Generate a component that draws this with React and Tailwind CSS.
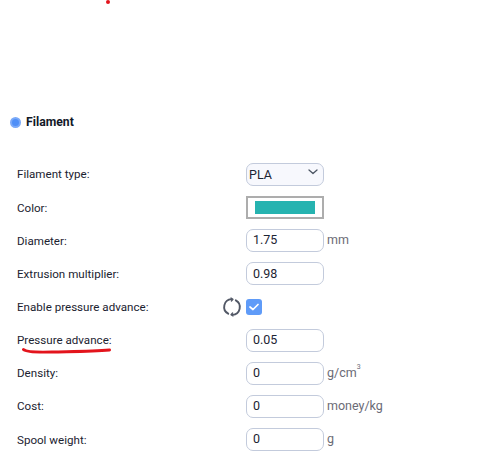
import React from "react";

const font = "font-['Roboto','Open_Sans',sans-serif]";

function TextInput({ value, unit }) {
  return (
    <div className="flex items-center gap-[3px]">
      <div className="w-[78px] h-[23px] border border-[#c3cbdc] rounded-[7px] pl-[6px] flex items-center text-[12.5px] text-[#1c2433] bg-white">
        {value}
      </div>
      {unit && <span className="text-[12.5px] text-[#6b6b76]">{unit}</span>}
    </div>
  );
}

function Row({ label, children, underline }) {
  return (
    <div className="h-[33.15px] flex items-center">
      <div className="relative w-[229px] pt-[1px] text-[11.6px] text-[#1b2230]">
        {label}
        {underline && (
          <svg className="absolute left-[5px] top-[16px]" width="90" height="8" viewBox="0 0 90 8" fill="none">
            <path d="M1.5 2.5C4 5 12 5.5 30 5C50 4.5 70 4.5 87.5 3" stroke="#e3141c" strokeWidth="3" strokeLinecap="round" />
          </svg>
        )}
      </div>
      {children}
    </div>
  );
}

export default function App() {
  return (
    <div className={`relative w-[480px] h-[465px] bg-white overflow-hidden ${font}`}>
      <div className="absolute left-[106px] top-0 w-[4px] h-[4px] rounded-full bg-[#e3141c]" />

      <div className="pt-[113px] pl-[10px] flex items-center gap-[5px] h-[132px]">
        <div className="w-[11px] h-[11px] rounded-full bg-[#4f8ff7] border-2 border-[#7aa9f8]" />
        <span className="text-[12.2px] font-bold text-[#111827]">Filament</span>
      </div>

      <div className="pt-[26px] pl-[17px]">
        <Row label="Filament type:">
          <div className="w-[78px] h-[23px] border border-[#c3cbdc] rounded-[7px] pl-[2px] pr-[5px] flex items-center justify-between text-[12.5px] text-[#1c2433] bg-[#f7f8fd]">
            <span className="pt-[1px]">PLA</span>
            <svg className="mb-[5px]" width="10" height="6" viewBox="0 0 10 6" fill="none">
              <path d="M1 1L5 4.5L9 1" stroke="#4b5563" strokeWidth="1.3" strokeLinecap="round" strokeLinejoin="round" />
            </svg>
          </div>
        </Row>
        <Row label="Color:">
          <div className="w-[78px] h-[23px] border-2 border-[#adadad] bg-white px-[7px] py-[3px]">
            <div className="w-full h-full bg-[#26b3b0]" />
          </div>
        </Row>
        <Row label="Diameter:">
          <TextInput value="1.75" unit="mm" />
        </Row>
        <Row label="Extrusion multiplier:">
          <TextInput value="0.98" />
        </Row>
        <Row label="Enable pressure advance:">
          <div className="relative">
            <svg className="absolute left-[-24px] top-[-2px]" width="20" height="20" viewBox="0 0 20 20" fill="none">
              <path d="M6.2 16.7A7.8 7.8 0 0 1 9.5 2.1" stroke="#525866" strokeWidth="1.9" strokeLinecap="round" />
              <path d="M13.8 3.3A7.8 7.8 0 0 1 10.5 17.9" stroke="#525866" strokeWidth="1.9" strokeLinecap="round" />
              <path d="M9 1L11 2.2L9.4 4" stroke="#525866" strokeWidth="1.3" strokeLinecap="round" strokeLinejoin="round" />
              <path d="M11 19L9 17.8L10.6 16" stroke="#525866" strokeWidth="1.3" strokeLinecap="round" strokeLinejoin="round" />
            </svg>
            <div className="w-[16px] h-[16px] rounded-[3px] bg-[#5f9bf8] flex items-center justify-center">
              <svg width="10" height="8" viewBox="0 0 10 8" fill="none">
                <path d="M1 4L4 6.5L9 1.5" stroke="white" strokeWidth="1.7" strokeLinecap="round" strokeLinejoin="round" />
              </svg>
            </div>
          </div>
        </Row>
        <Row label="Pressure advance:" underline>
          <TextInput value="0.05" />
        </Row>
        <Row label="Density:">
          <TextInput
            value="0"
            unit={
              <span className="relative">
                g/cm<span className="absolute top-[-3px] left-full text-[7px]">3</span>
              </span>
            }
          />
        </Row>
        <Row label="Cost:">
          <TextInput value="0" unit="money/kg" />
        </Row>
        <Row label="Spool weight:">
          <TextInput value="0" unit="g" />
        </Row>
      </div>
    </div>
  );
}
